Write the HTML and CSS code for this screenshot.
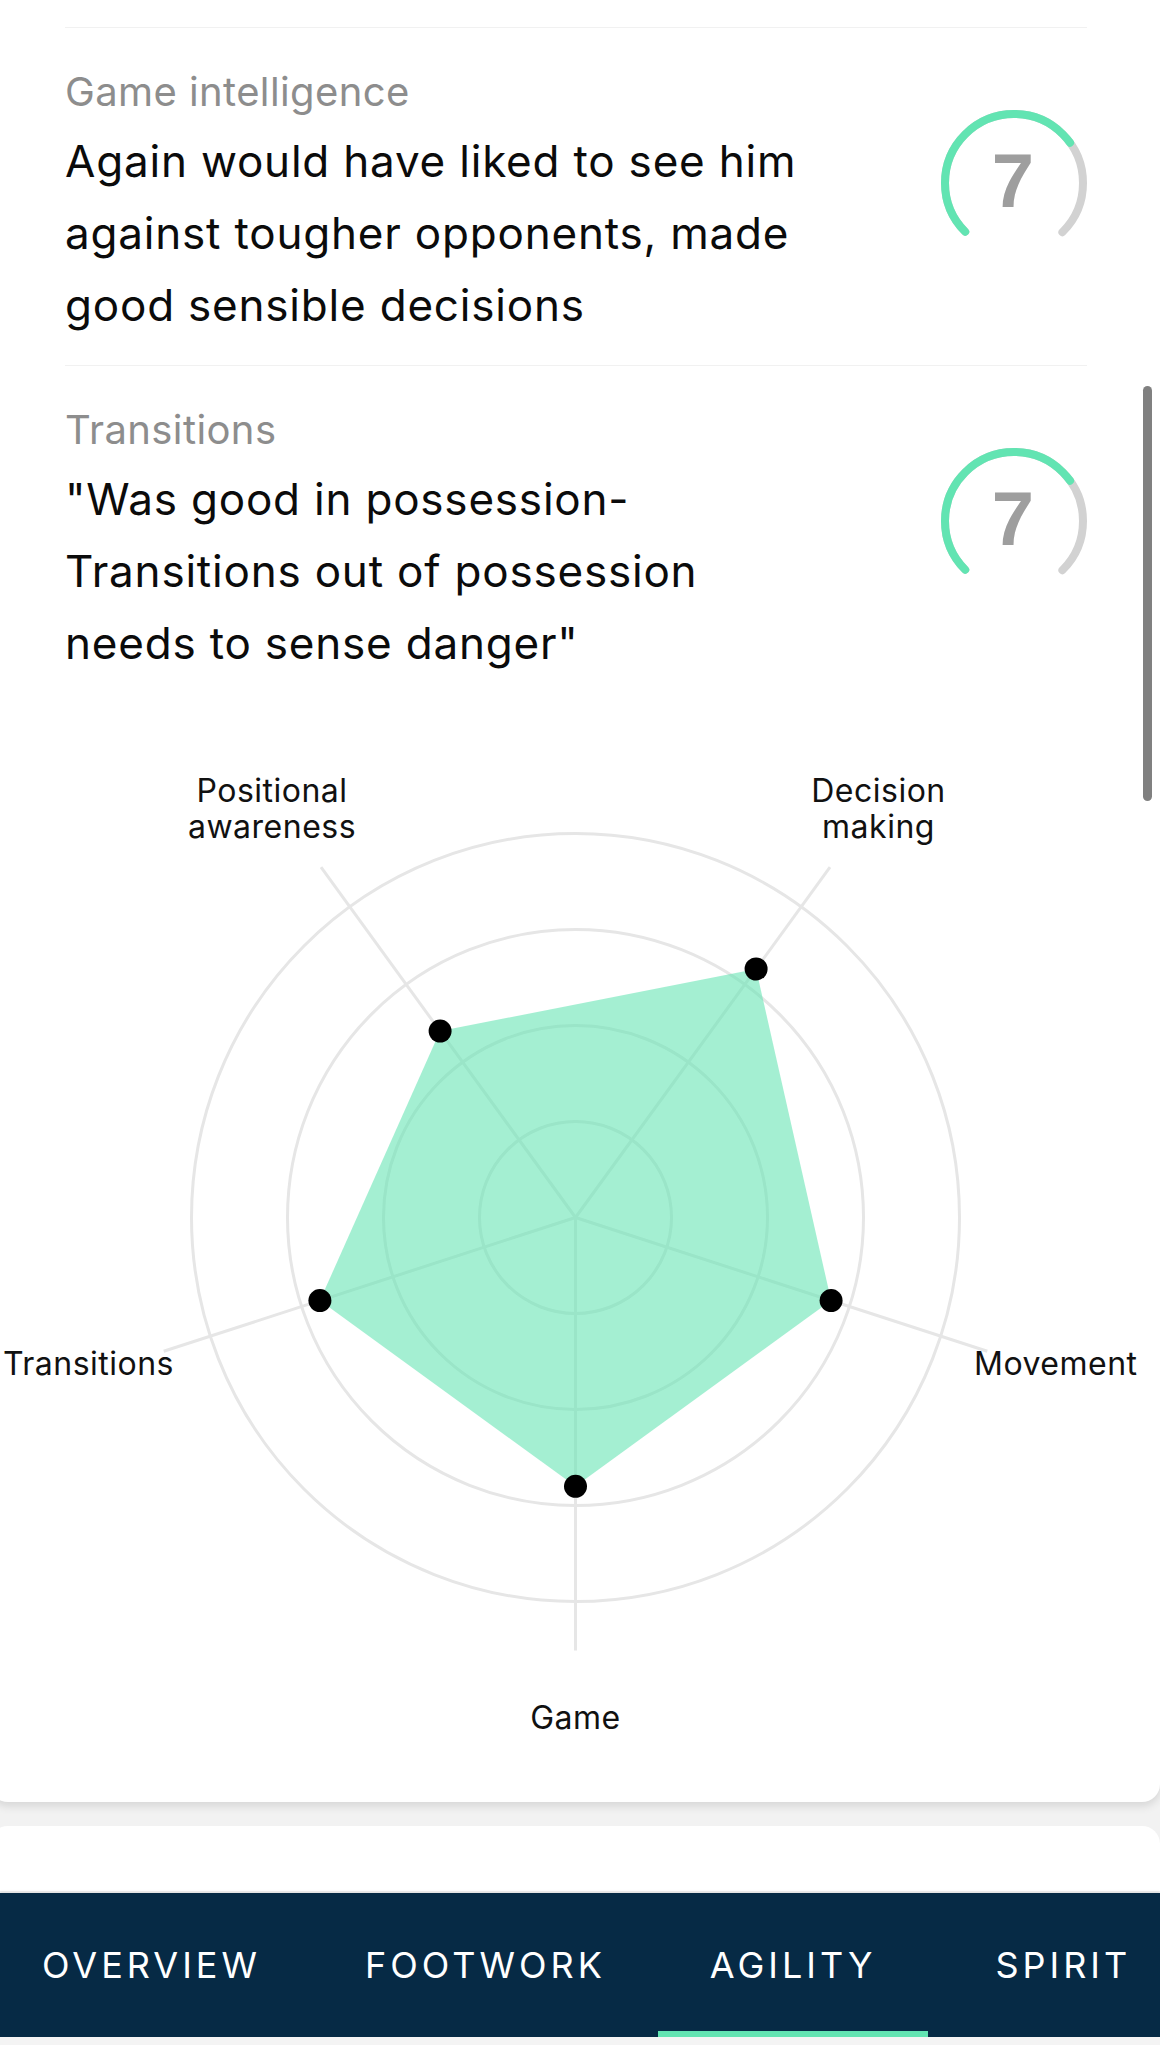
FILE: index.html
```html
<!DOCTYPE html>
<html lang="en">
<head>
    <meta charset="UTF-8">
    <meta name="viewport" content="width=device-width, initial-scale=1.0">
    <title>Player report - Agility</title>
    <link rel="stylesheet" href="styles.css">
</head>
<body>
    <div class="page">
        <div class="card">
            <!-- Game intelligence -->
            <div class="rating">
                <div class="rating-text">
                    <div class="rating-label">Game intelligence</div>
                    <div class="rating-comment">Again would have liked to see him against tougher opponents, made good sensible decisions</div>
                </div>
                <svg class="gauge" width="146" height="146" viewBox="0 0 146 146">
                    <circle class="gauge-track" cx="73" cy="73" r="69" transform="rotate(135 73 73)" stroke-dasharray="325.2 433.5"></circle>
                    <circle class="gauge-value" cx="73" cy="73" r="69" transform="rotate(135 73 73)" stroke-dasharray="227.6 433.5"></circle>
                    <text class="gauge-score" x="72" y="97">7</text>
                </svg>
            </div>

            <!-- Transitions -->
            <div class="rating">
                <div class="rating-text">
                    <div class="rating-label">Transitions</div>
                    <div class="rating-comment">"Was good in possession-Transitions out of possession needs to sense danger"</div>
                </div>
                <svg class="gauge" width="146" height="146" viewBox="0 0 146 146">
                    <circle class="gauge-track" cx="73" cy="73" r="69" transform="rotate(135 73 73)" stroke-dasharray="325.2 433.5"></circle>
                    <circle class="gauge-value" cx="73" cy="73" r="69" transform="rotate(135 73 73)" stroke-dasharray="227.6 433.5"></circle>
                    <text class="gauge-score" x="72" y="97">7</text>
                </svg>
            </div>

            <!-- radar: values out of 10, 38.4px per point -->
            <svg class="radar" width="1150" height="1099" viewBox="0 0 1150 1099">
                <g transform="translate(575.5 514.5)">
                    <circle class="grid" r="96"></circle>
                    <circle class="grid" r="192"></circle>
                    <circle class="grid" r="288"></circle>
                    <circle class="grid" r="384"></circle>
                    <line class="grid" x1="0" y1="0" x2="-254.5" y2="-350.3"></line>
                    <line class="grid" x1="0" y1="0" x2="254.5" y2="-350.3"></line>
                    <line class="grid" x1="0" y1="0" x2="411.8" y2="133.8"></line>
                    <line class="grid" x1="0" y1="0" x2="0" y2="433"></line>
                    <line class="grid" x1="0" y1="0" x2="-411.8" y2="133.8"></line>

                    <polygon class="area" points="-135.4,-186.4 180.6,-248.5 255.6,83.1 0,268.8 -255.6,83.1"></polygon>

                    <circle class="point" cx="-135.4" cy="-186.4" r="11.5"></circle>
                    <circle class="point" cx="180.6" cy="-248.5" r="11.5"></circle>
                    <circle class="point" cx="255.6" cy="83.1" r="11.5"></circle>
                    <circle class="point" cx="0" cy="268.8" r="11.5"></circle>
                    <circle class="point" cx="-255.6" cy="83.1" r="11.5"></circle>

                    <text class="axis-label" x="-303.5" y="-415.5">Positional</text>
                    <text class="axis-label" x="-303.5" y="-379.5">awareness</text>
                    <text class="axis-label" x="303" y="-415.5">Decision</text>
                    <text class="axis-label" x="303" y="-379.5">making</text>
                    <text class="axis-label axis-label-right" x="398.5" y="157.5">Movement</text>
                    <text class="axis-label" x="0" y="511.5">Game</text>
                    <text class="axis-label axis-label-left" x="-401.5" y="157.5">Transitions</text>
                </g>
            </svg>
        </div>

        <div class="card card-next"></div>
    </div>

    <nav class="tabs">
        <div class="tab">OVERVIEW</div>
        <div class="tab">FOOTWORK</div>
        <div class="tab active">AGILITY</div>
        <div class="tab">SPIRIT</div>
    </nav>
    <div class="system-bar"></div>

    <div class="scrollbar"></div>
</body>
</html>
```

FILE: styles.css
```css
body {
    font-family: Inter, "Liberation Sans", Arial, sans-serif;
    background-color: #f2f2f2;
    color: #0b0b0b;
    margin: 0;
    padding: 0;
    height: 100vh;
    display: flex;
    flex-direction: column;
    overflow: hidden;
    position: relative;
}

.page {
    flex: 1;
    overflow: hidden;
}

.card {
    background-color: white;
    margin-left: -10px;
    border-radius: 0 0 18px 18px;
    padding-top: 27px;
    box-shadow: 0 4px 10px rgba(0, 0, 0, 0.12);
}

.card-next {
    margin-top: 24px;
    height: 65px;
    padding: 0;
    border-radius: 18px 18px 0 0;
    box-shadow: none;
}

.rating {
    display: flex;
    justify-content: space-between;
    align-items: flex-start;
    margin: 0 73px 0 75px;
    padding: 40px 0 24px;
    border-top: 1px solid #f1f1f1;
}

.rating-text {
    max-width: 760px;
}

.rating-label {
    font-size: 40px;
    line-height: 48px;
    letter-spacing: 0.4px;
    color: #8d8d8d;
}

.rating-comment {
    margin-top: 9px;
    font-size: 44px;
    line-height: 72px;
    letter-spacing: 0.8px;
}

.gauge {
    flex-shrink: 0;
    margin-top: 42px;
}

.gauge circle {
    fill: none;
    stroke-width: 8;
    stroke-linecap: round;
}

.gauge-track {
    stroke: #d2d2d2;
}

.gauge-value {
    stroke: #62e4b2;
}

.gauge-score {
    font-family: "Liberation Sans", Arial, sans-serif;
    font-weight: bold;
    font-size: 76px;
    fill: #9e9e9e;
    text-anchor: middle;
}

.radar {
    display: block;
    margin-left: 10px;
}

.radar .grid {
    fill: none;
    stroke: #e6e6e6;
    stroke-width: 3;
}

.radar .area {
    fill: rgba(98, 228, 178, 0.58);
}

.radar .point {
    fill: black;
}

.axis-label {
    font-family: Inter, "Liberation Sans", Arial, sans-serif;
    font-size: 32px;
    letter-spacing: 0.5px;
    fill: #111;
    text-anchor: middle;
}

.axis-label-left {
    text-anchor: end;
}

.axis-label-right {
    text-anchor: start;
}

.tabs {
    height: 144px;
    flex-shrink: 0;
    display: flex;
    background-color: #062a45;
    box-shadow: 0 -2px 2px rgba(0, 0, 0, 0.06);
}

.tab {
    position: relative;
    box-sizing: border-box;
    min-width: 270px;
    padding: 0 52px;
    flex-shrink: 0;
    text-align: center;
    line-height: 144px;
    font-size: 36px;
    letter-spacing: 4px;
    color: white;
}

.tab:first-child {
    margin-left: -10px;
}

.tab.active::after {
    content: "";
    position: absolute;
    left: 0;
    right: 0;
    bottom: 0;
    height: 6px;
    background-color: #62e4b2;
}

.system-bar {
    height: 8px;
    flex-shrink: 0;
    background-color: #f4f4f4;
}

.scrollbar {
    position: absolute;
    left: 1143px;
    top: 386px;
    width: 9px;
    height: 415px;
    border-radius: 5px;
    background-color: #808080;
}
```
